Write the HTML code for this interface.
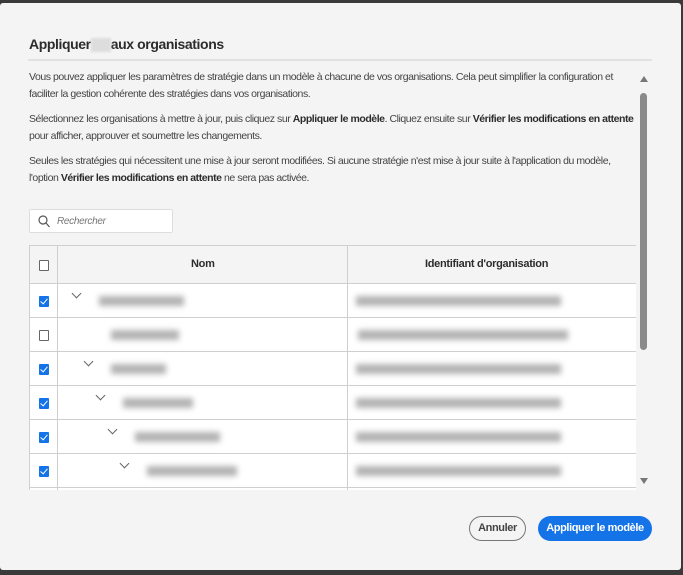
<!DOCTYPE html>
<html><head><style>
*{margin:0;padding:0;box-sizing:border-box}
body{width:683px;height:575px;background:#3a3a3a;font-family:"Liberation Sans",sans-serif;position:relative;overflow:hidden}
.dlg{position:absolute;left:0;top:3px;width:681px;height:567px;background:#f4f4f4;border-radius:3px}
.t{position:absolute;left:29px;top:33px;font-size:14px;font-weight:bold;color:#2c2c2c;letter-spacing:-.4px}
.hr{position:absolute;left:28px;top:56px;width:624px;height:2px;background:#e1e1e1}
p{position:absolute;left:29px;font-size:10.5px;color:#444;line-height:16.5px;letter-spacing:-.45px;width:605px}
b{color:#2c2c2c}
.search{position:absolute;left:29px;top:206px;width:144px;height:24px;border:1px solid #ddd;background:#fff;border-radius:2px;font-size:10px;font-style:italic;color:#777;padding:6px 0 0 27px;letter-spacing:-.3px}
.tbl{position:absolute;left:29px;top:242px;width:607px;height:245px;overflow:hidden;background:#fff;border-top:1px solid #cfcfcf}
.hd{height:38px;background:#f4f4f4;border-bottom:1px solid #cfcfcf;position:relative;font-size:11px;font-weight:bold;color:#2c2c2c;letter-spacing:-.3px}
.row{height:34px;border-bottom:1px solid #cfcfcf;position:relative}
.c1{position:absolute;left:0;top:0;width:29px;height:100%;border-right:1px solid #cfcfcf;border-left:1px solid #cfcfcf}
.c3{position:absolute;left:318px;top:0;height:100%;border-left:1px solid #cfcfcf}
.cb{position:absolute;left:9px;top:12px;width:10px;height:11px;border:1px solid #666;background:#fff;border-radius:1px}
.ck{border:none;background:#1473e6}
.ck:after{content:"";position:absolute;left:3px;top:1px;width:3px;height:6px;border:solid #fff;border-width:0 1.5px 1.5px 0;transform:rotate(40deg)}
.bl{position:absolute;top:12px;height:10px;background:#999;filter:blur(3px);opacity:.75}
.chev{position:absolute;top:6px;width:7px;height:7px;border:solid #666;border-width:0 1.3px 1.3px 0;transform:rotate(45deg)}
.sb{position:absolute;left:640px;top:90px;width:7px;height:257px;background:#8a8a8a;border-radius:4px}
.btn{position:absolute;top:513px;height:25px;border-radius:13px;font-size:11px;font-weight:bold;text-align:center;line-height:22px;letter-spacing:-.4px}
</style></head><body>
<div class="dlg">
<div class="t">Appliquer<span style="display:inline-block;width:20px;height:14px;background:#ddd;vertical-align:middle;filter:blur(1px)"></span>aux organisations</div>
<div class="hr"></div>
<p style="top:66px">Vous pouvez appliquer les paramètres de stratégie dans un modèle à chacune de vos organisations. Cela peut simplifier la configuration et<br>faciliter la gestion cohérente des stratégies dans vos organisations.</p>
<p style="top:108px">Sélectionnez les organisations à mettre à jour, puis cliquez sur <b>Appliquer le modèle</b>. Cliquez ensuite sur <b>Vérifier les modifications en attente</b><br>pour afficher, approuver et soumettre les changements.</p>
<p style="top:150px">Seules les stratégies qui nécessitent une mise à jour seront modifiées. Si aucune stratégie n'est mise à jour suite à l'application du modèle,<br>l'option <b>Vérifier les modifications en attente</b> ne sera pas activée.</p>
<div class="search"><svg style="position:absolute;left:8px;top:5px" width="12" height="13" viewBox="0 0 12 13"><circle cx="5" cy="5" r="4" fill="none" stroke="#555" stroke-width="1.2"/><path d="M8 8l3.5 4" stroke="#555" stroke-width="1.2"/></svg>Rechercher</div>
<div class="sb"></div>
<div style="position:absolute;left:640px;top:73px;border:4px solid transparent;border-bottom:6px solid #777;border-top:0"></div>
<div style="position:absolute;left:640px;top:475px;border:4px solid transparent;border-top:6px solid #777;border-bottom:0"></div>
<div class="tbl">
<div class="hd"><div class="c1"><div class="cb" style="top:14px"></div></div><div style="position:absolute;left:162px;top:12px">Nom</div><div class="c3" style="padding:12px 0 0 77px;width:289px">Identifiant d'organisation</div></div>
<div class="row"><div class="c1"><div class="cb ck"></div></div><div class="chev" style="left:44px"></div><div class="bl" style="left:70px;width:85px"></div><div class="c3"><div class="bl" style="left:8px;width:205px"></div></div></div>
<div class="row"><div class="c1"><div class="cb"></div></div><div class="bl" style="left:82px;width:68px"></div><div class="c3"><div class="bl" style="left:10px;width:210px"></div></div></div>
<div class="row"><div class="c1"><div class="cb ck"></div></div><div class="chev" style="left:56px"></div><div class="bl" style="left:82px;width:55px"></div><div class="c3"><div class="bl" style="left:8px;width:205px"></div></div></div>
<div class="row"><div class="c1"><div class="cb ck"></div></div><div class="chev" style="left:68px"></div><div class="bl" style="left:94px;width:70px"></div><div class="c3"><div class="bl" style="left:8px;width:205px"></div></div></div>
<div class="row"><div class="c1"><div class="cb ck"></div></div><div class="chev" style="left:80px"></div><div class="bl" style="left:106px;width:85px"></div><div class="c3"><div class="bl" style="left:8px;width:205px"></div></div></div>
<div class="row"><div class="c1"><div class="cb ck"></div></div><div class="chev" style="left:92px"></div><div class="bl" style="left:118px;width:90px"></div><div class="c3"><div class="bl" style="left:8px;width:205px"></div></div></div>
<div class="row"><div class="c1"></div><div class="c3"></div></div>
</div>
<div class="btn" style="left:469px;width:57px;border:1.5px solid #777;color:#444">Annuler</div>
<div class="btn" style="left:538px;width:114px;background:#1473e6;color:#fff;line-height:25px">Appliquer le modèle</div>
</div>
</body></html>
